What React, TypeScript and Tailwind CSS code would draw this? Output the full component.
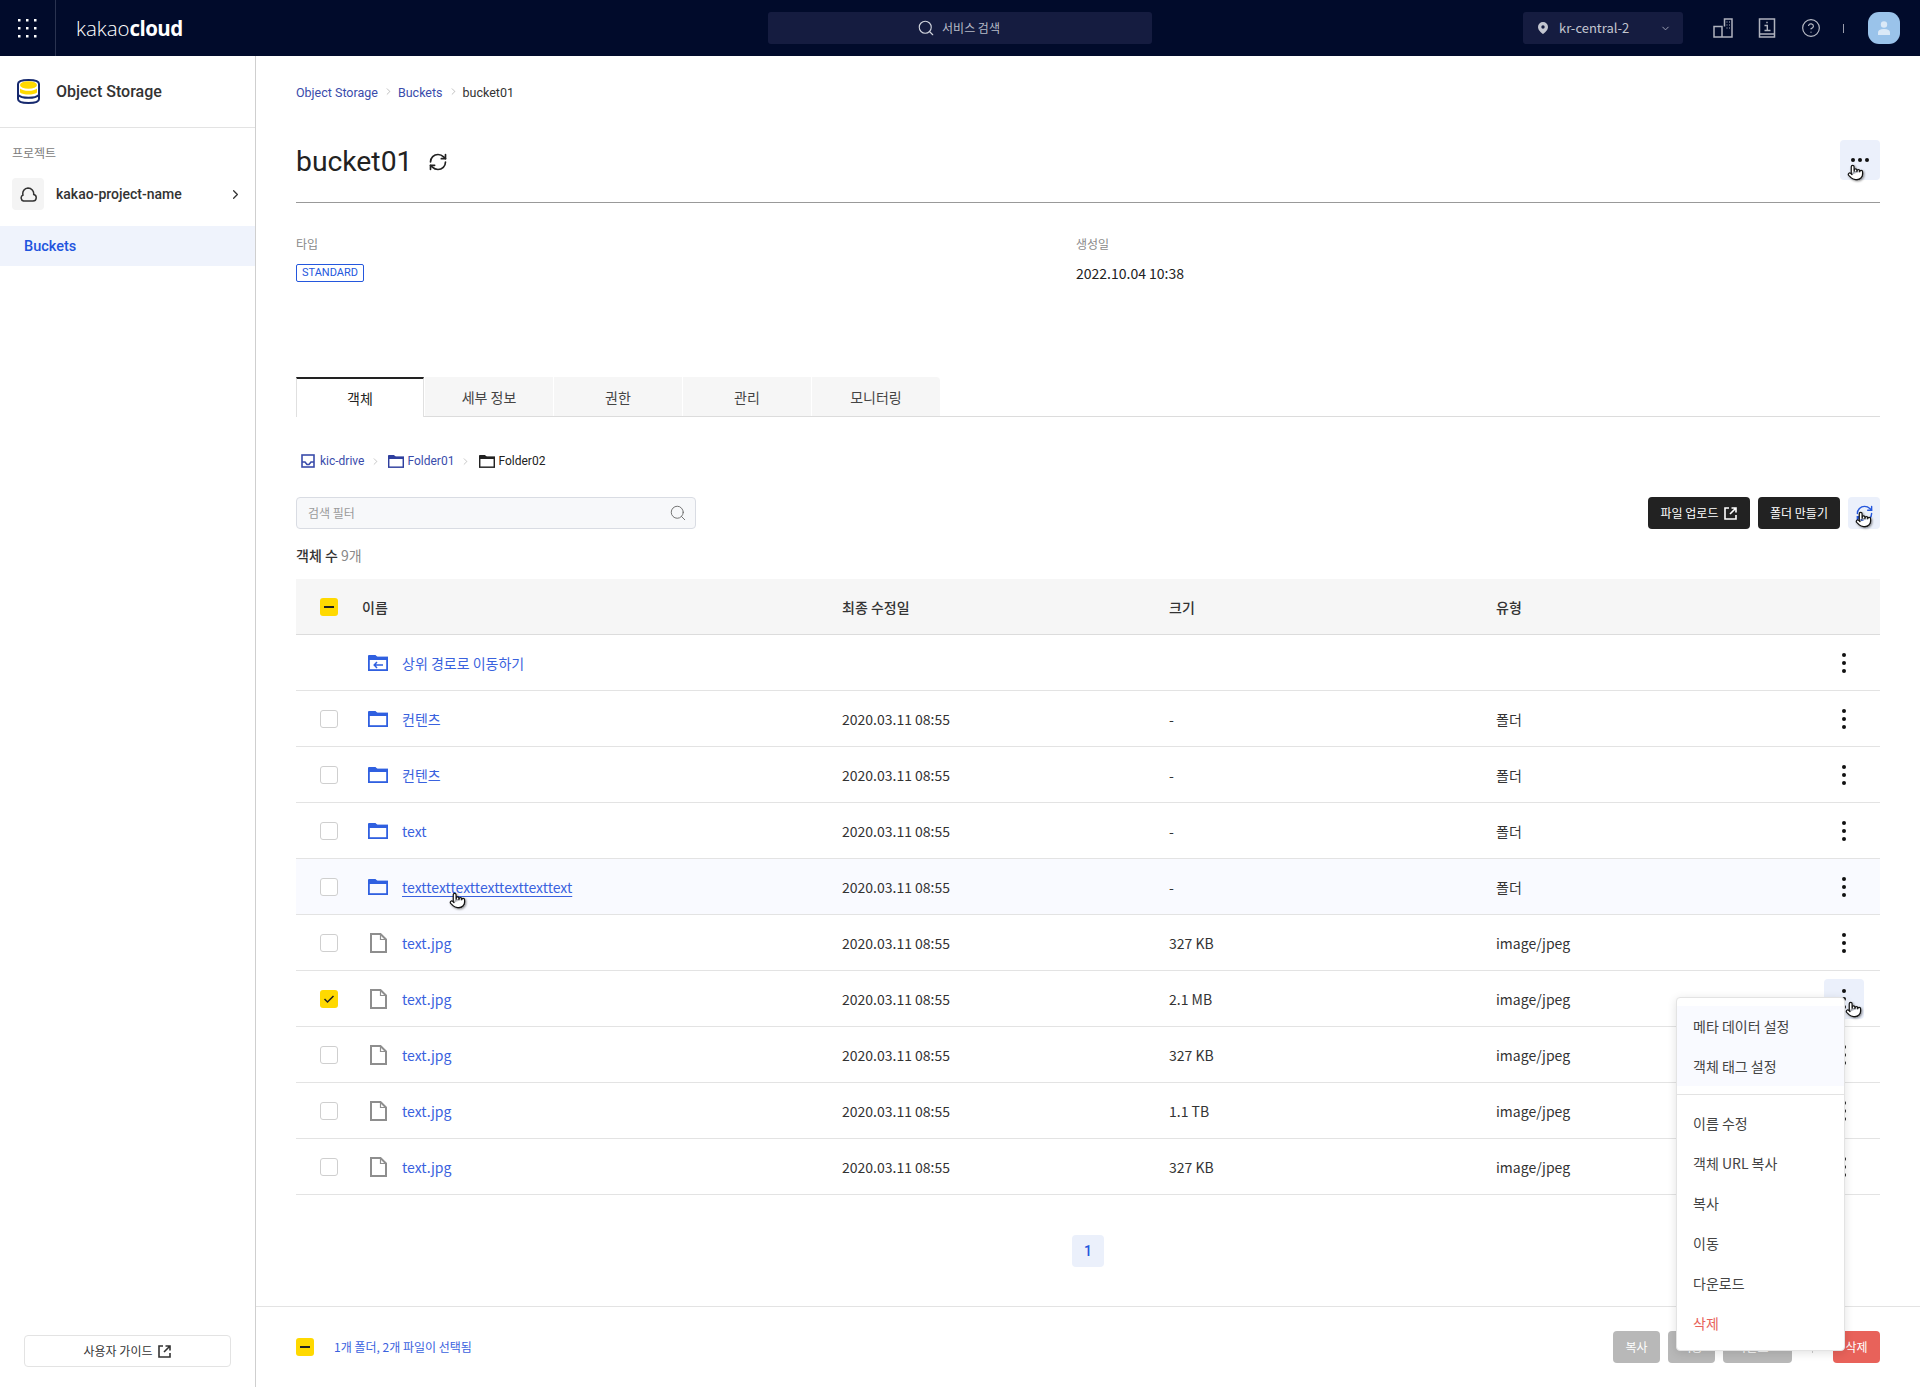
import React from "react";
import { ChevronRight, ChevronDown, CircleHelp, RefreshCw, Search, Pointer } from "lucide-react";

const K = "font-['Noto_Sans_CJK_KR','Noto_Sans',sans-serif]";
const R = "font-['Roboto','Noto_Sans_CJK_KR',sans-serif]";

function Ext({ className = "" }: { className?: string }) {
  return (
    <svg width="13" height="13" viewBox="0 0 13 13" fill="none" stroke="currentColor" strokeWidth="1.6" className={className}>
      <path d="M5 1H1v11h11V8" />
      <path d="M7.500 1H12v4.500M12 1 6 7" />
    </svg>
  );
}

function Folder({ color = "#3060e0", sw = 1.8, small = false }: { color?: string; sw?: number; small?: boolean }) {
  return (
    <svg width={small ? 16 : 20} height={small ? 13 : 16} viewBox="0 0 20 16" fill="none" className="shrink-0">
      <path d="M0 1A1 1 0 0 1 1 0h6.500L10 2.500h10v2.500H0z" fill={color} />
      <rect x={sw / 2} y="2.500" width={20 - sw} height={12.600} stroke={color} strokeWidth={sw} />
    </svg>
  );
}

function FileIcon() {
  return (
    <svg width="17" height="20" viewBox="0 0 17 20" fill="none" className="shrink-0">
      <path d="M1 1h9.500L16 6.500V19H1z" fill="#fff" stroke="#8e8e8e" strokeWidth="2" />
      <path d="M10.500 1v5.500H16" stroke="#8e8e8e" strokeWidth="1.200" />
    </svg>
  );
}

function Cb({ state }: { state: "none" | "mixed" | "checked" }) {
  if (state === "none") return <div className="w-[18px] h-[18px] rounded-[3px] border border-[#cfcfcf] bg-white" />;
  return (
    <div className="w-[18px] h-[18px] rounded-[3px] bg-[#ffd900] flex items-center justify-center">
      {state === "mixed" ? (
        <div className="w-[10px] h-[2px] bg-[#222]" />
      ) : (
        <svg width="12" height="10" viewBox="0 0 12 10" fill="none" stroke="#222" strokeWidth="1.500">
          <path d="M1.500 5 4.500 8l6-6" />
        </svg>
      )}
    </div>
  );
}

function Kebab({ active = false }: { active?: boolean }) {
  return (
    <div className={`w-10 h-10 rounded-[4px] flex flex-col items-center justify-center gap-[4px] ${active ? "bg-[#ebf0fb]" : ""}`}>
      <span className="w-1 h-1 rounded-full bg-[#111]" />
      <span className="w-1 h-1 rounded-full bg-[#111]" />
      <span className="w-1 h-1 rounded-full bg-[#111]" />
    </div>
  );
}

function Hand({ className }: { className: string }) {
  return <Pointer size={17} strokeWidth={1.700} fill="#fff" stroke="#111" className={`absolute drop-shadow-[1px_1px_1px_rgba(0,0,0,0.45)] ${className}`} />;
}

type Row = { name: string; kind: "up" | "folder" | "file"; date?: string; size?: string; type?: string; check?: boolean; hover?: boolean; active?: boolean };
const d = "2020.03.11 08:55";
const rows: Row[] = [
  { name: "상위 경로로 이동하기", kind: "up" },
  { name: "컨텐츠", kind: "folder", date: d, size: "-", type: "폴더" },
  { name: "컨텐츠", kind: "folder", date: d, size: "-", type: "폴더" },
  { name: "text", kind: "folder", date: d, size: "-", type: "폴더" },
  { name: "texttexttexttexttexttexttext", kind: "folder", date: d, size: "-", type: "폴더", hover: true },
  { name: "text.jpg", kind: "file", date: d, size: "327 KB", type: "image/jpeg" },
  { name: "text.jpg", kind: "file", date: d, size: "2.1 MB", type: "image/jpeg", check: true, active: true },
  { name: "text.jpg", kind: "file", date: d, size: "327 KB", type: "image/jpeg" },
  { name: "text.jpg", kind: "file", date: d, size: "1.1 TB", type: "image/jpeg" },
  { name: "text.jpg", kind: "file", date: d, size: "327 KB", type: "image/jpeg" },
];
const cols = "grid grid-cols-[66px_480px_327px_327px_1fr] items-center";

export default function App() {
  return (
    <div className={`relative w-[1920px] h-[1387px] overflow-hidden bg-white text-[#222] flex flex-col ${K}`}>
      {/* top bar */}
      <header className="h-14 bg-[#010b2b] flex items-center shrink-0">
        <div className="w-14 h-14 border-r border-[#2a3350] flex items-center justify-center">
          <svg width="19" height="19" viewBox="0 0 19 19" fill="#fff">
            {[0, 8, 16].flatMap((y) => [0, 8, 16].map((x) => <rect key={`${x}-${y}`} x={x} y={y} width="2.500" height="2.500" />))}
          </svg>
        </div>
        <div className="ml-5 w-[300px] text-[20.500px] leading-none text-white font-['Open_Sans',sans-serif]">
          <span className="font-light">kakao</span>
          <span className="font-bold tracking-[-0.6px]">cloud</span>
        </div>
        <div className="ml-[392px] w-[384px] h-8 rounded-[3px] bg-[#151c40] flex items-center justify-center gap-[7px] pr-[3px] text-[12px] text-[#b6bac6]">
          <Search size={18} strokeWidth={1.500} className="text-[#d0d3dc]" />
          <span>서비스 검색</span>
        </div>
        <div className="ml-[371px] w-[160px] h-8 rounded-[3px] bg-[#151c40] flex items-center pl-[15px] pr-[12px] text-[13px] text-[#c3c6d0]">
          <svg width="10" height="12" viewBox="0 0 10 12" className="shrink-0">
            <path fillRule="evenodd" d="M5 0a5 5 0 0 1 5 5c0 3-3 5.500-5 7C3 10.500 0 8 0 5a5 5 0 0 1 5-5zm0 3.300a1.700 1.700 0 1 0 0 3.400 1.700 1.700 0 0 0 0-3.400z" fill="#c3c6d0" />
          </svg>
          <span className="ml-[11px] flex-1">kr-central-2</span>
          <ChevronDown size={11} className="text-[#a6aabb]" />
        </div>
        <svg width="20" height="20" viewBox="0 0 20 20" fill="none" stroke="#b0b3be" strokeWidth="1.500" className="ml-[30px]">
          <path d="M1 8.500h8V19H1zM9 19h10V1H11.500v7.500" />
          <path d="M13.500 4h1M16 4h1M13.500 7h1M16 7h1M13.500 10h1M16 10h1" strokeWidth="1.200" />
        </svg>
        <svg width="18" height="20" viewBox="0 0 18 20" fill="none" stroke="#b0b3be" strokeWidth="1.500" className="ml-[25px]">
          <path d="M1.500 16V1h15v18h-15zM1.500 16h15" />
          <path d="M9 3.800v1.400M6.500 7.500H9.300V12M6.500 12.500h6" strokeWidth="1.400" />
        </svg>
        <CircleHelp size={20} strokeWidth={1.400} className="ml-[25px] text-[#b9bcc6]" />
        <div className="ml-[22px] w-px h-[9px] bg-[#9a9dac]" />
        <div className="ml-[24px] w-8 h-8 rounded-[11px] bg-[#9ac3ea] flex items-center justify-center">
          <svg width="12" height="14" viewBox="0 0 12 14" fill="#dbe9f7">
            <circle cx="6" cy="3.500" r="3.200" />
            <path d="M0 14v-2.500C0 9.500 2 8 6 8s6 1.500 6 3.500V14z" />
          </svg>
        </div>
      </header>

      <div className="flex-1 flex min-h-0">
        {/* sidebar */}
        <aside className="w-[256px] shrink-0 border-r border-[#cfcfcf] flex flex-col">
          <div className="h-[72px] border-b border-[#e3e3e3] flex items-center pl-[17px] gap-[16px]">
            <svg width="23" height="25" viewBox="0 0 23 25" className="shrink-0">
              <path d="M1 5c0-2.500 4.500-4 10.500-4S22 2.500 22 5v15c0 2.500-4.500 4-10.500 4S1 22.500 1 20z" fill="#fff" stroke="#16296e" strokeWidth="2" />
              <ellipse cx="11.500" cy="6" rx="8.500" ry="3.800" fill="#ffd900" />
              <path d="M3 9.500c2 1.700 5 2.300 8.500 2.300S18 11 20 9.500v4c-2 1.500-5 2-8.500 2S5 15 3 13.500z" fill="#ffd900" />
              <path d="M1 16c2 2 6 2.800 10.500 2.800S20 18 22 16" fill="none" stroke="#16296e" strokeWidth="2" />
            </svg>
            <span className={`text-[16px] font-medium text-[#333] ${R}`}>Object Storage</span>
          </div>
          <div className="pl-3 pt-[16px] text-[12px] leading-[18px] text-[#7b7b7b]">프로젝트</div>
          <div className="mt-[16px] h-8 pl-3 pr-[12px] flex items-center">
            <div className="w-8 h-8 rounded-[4px] bg-[#f4f4f4] flex items-center justify-center">
              <svg width="18" height="15" viewBox="0 0 18 15" fill="none" stroke="#333" strokeWidth="1.500">
                <path d="M4.500 14H14a3.300 3.300 0 0 0 .7-6.500A5.800 5.800 0 0 0 9 1a5.500 5.500 0 0 0-5 7A3.200 3.200 0 0 0 4.500 14z" />
              </svg>
            </div>
            <span className={`ml-3 flex-1 text-[14px] font-medium text-[#333] ${R}`}>kakao-project-name</span>
            <ChevronRight size={15} strokeWidth={2} className="text-[#333]" />
          </div>
          <div className={`mt-4 h-10 bg-[#eff3fc] flex items-center pl-6 pt-[2px] text-[14.500px] font-medium text-[#1f55de] ${R}`}>Buckets</div>
          <div className="mt-auto mx-6 mb-5 h-8 w-[207px] rounded-[4px] border border-[#e3e3e3] flex items-center justify-center gap-[6px] text-[12px] text-[#333]">
            <span>사용자 가이드</span>
            <Ext />
          </div>
        </aside>

        {/* main */}
        <main className="flex-1 min-w-0 flex flex-col">
          <div className="flex-1 px-10 pt-[28px]">
            <div className={`flex items-center h-[18px] text-[12.500px] ${R}`}>
              <span className="text-[#3a4cab]">Object Storage</span>
              <ChevronRight size={11} strokeWidth={1} className="ml-[5px] mr-[4px] -mt-1 text-[#777]" />
              <span className="text-[#3a4cab]">Buckets</span>
              <ChevronRight size={11} strokeWidth={1} className="ml-[5px] mr-[4px] -mt-1 text-[#777]" />
              <span className="text-[#333]">bucket01</span>
            </div>
            <div className="mt-[38px] h-[63px] border-b border-[#999] flex items-start justify-between">
              <div className="flex items-center gap-4 pt-[2px]">
                <h1 className={`text-[28.300px] leading-[40px] font-normal text-[#222] ${R}`}>bucket01</h1>
                <RefreshCw size={20} strokeWidth={2} className="text-[#222]" />
              </div>
              <div className="w-10 h-10 rounded-[4px] bg-[#ebf0fb] flex items-center justify-center gap-[3px]">
                <span className="w-1 h-1 rounded-full bg-[#111]" />
                <span className="w-1 h-1 rounded-full bg-[#111]" />
                <span className="w-1 h-1 rounded-full bg-[#111]" />
              </div>
            </div>
            <div className="mt-[32px] grid grid-cols-[780px_1fr] h-[142px]">
              <div>
                <div className="text-[12px] leading-[18px] text-[#8a8a8a]">타입</div>
                <div className={`mt-[11px] w-[68px] h-[18px] rounded-[2px] border border-[#2457dd] flex items-center justify-center text-[11px] text-[#2457dd] ${R}`}>STANDARD</div>
              </div>
              <div>
                <div className="text-[12px] leading-[18px] text-[#8a8a8a]">생성일</div>
                <div className="mt-[10px] text-[14px] leading-[20px] text-[#222]">2022.10.04 10:38</div>
              </div>
            </div>

            {/* tabs */}
            <div className="flex h-10 gap-px border-b border-[#dcdcdc] text-[14px]">
              <div className="w-[128px] h-10 bg-white border-t-2 border-x border-[#222] border-x-[#e0e0e0] flex items-center justify-center">객체</div>
              {["세부 정보", "권한", "관리", "모니터링"].map((t, i) => (
                <div key={t} className={`w-[128px] h-10 pt-[1px] border-b border-[#dcdcdc] bg-[#f6f6f6] flex items-center justify-center text-[#444] ${i === 3 ? "rounded-tr-[4px]" : ""}`}>
                  {t}
                </div>
              ))}
            </div>

            {/* path */}
            <div className={`mt-[35px] h-[18px] pl-[5px] flex items-center text-[12px] ${R}`}>
              <svg width="14" height="14" viewBox="0 0 14 14" fill="none" stroke="#3a4cab" strokeWidth="1.600" className="mr-[5px]">
                <rect x="1" y="1" width="12" height="12" />
                <path d="M1 8h3l2 2.500h2L10 8h3" />
              </svg>
              <span className="text-[#3a4cab]">kic-drive</span>
              <ChevronRight size={11} strokeWidth={1} className="ml-[6px] mr-[5px] text-[#888]" />
              <span className="mr-[3px] ml-[2px] flex"><Folder small color="#2f3f9e" /></span>
              <span className="text-[#3a4cab]">Folder01</span>
              <ChevronRight size={11} strokeWidth={1} className="ml-[6px] mr-[5px] text-[#888]" />
              <span className="mr-[3px] ml-[3px] flex"><Folder small color="#222" /></span>
              <span className="text-[#222]">Folder02</span>
            </div>

            {/* filters */}
            <div className="mt-[27px] flex items-center justify-between">
              <div className="w-[400px] h-8 rounded-[4px] border border-[#d9dce3] bg-[#f7f8fa] flex items-center justify-between pl-[11px] pr-[8px] text-[12px] text-[#9a9a9a]">
                <span>검색 필터</span>
                <Search size={18} strokeWidth={1.200} className="text-[#666]" />
              </div>
              <div className="flex items-center gap-2">
                <div className="w-[102px] h-8 rounded-[4px] bg-[#222] text-white text-[12px] flex items-center justify-center gap-[6px]">
                  <span>파일 업로드</span>
                  <Ext />
                </div>
                <div className="w-[82px] h-8 rounded-[4px] bg-[#222] text-white text-[12px] flex items-center justify-center">폴더 만들기</div>
                <div className="w-8 h-8 rounded-[4px] bg-[#ebf0fb] flex items-center justify-center">
                  <RefreshCw size={19} strokeWidth={1.800} className="text-[#2457dd]" />
                </div>
              </div>
            </div>

            <div className="mt-[16px] h-[20px] text-[14px] leading-[20px] font-medium text-[#333]">
              객체 수 <span className="font-normal text-[#888]">9개</span>
            </div>

            {/* table */}
            <div className={`mt-[14px] h-[56px] bg-[#f6f6f6] border-b border-[#dcdcdc] text-[14px] leading-[22px] font-medium text-[#333] ${cols}`}>
              <div className="pl-6"><Cb state="mixed" /></div>
              <div className="pt-[1px]">이름</div>
              <div className="pt-[1px]">최종 수정일</div>
              <div className="pt-[1px]">크기</div>
              <div className="pt-[1px]">유형</div>
            </div>
            {rows.map((r, i) => (
              <div key={i} className={`h-[56px] border-b border-[#e3e3e3] text-[14px] leading-[22px] text-[#333] ${cols} ${r.hover ? "bg-[#f9faff]" : ""}`}>
                <div className="pl-6">{r.kind !== "up" && <Cb state={r.check ? "checked" : "none"} />}</div>
                <div className="flex items-center -ml-[1px] pl-[7px]">
                  <span className="w-[34px] flex">
                    {r.kind === "file" ? (
                      <span className="ml-[2px] flex"><FileIcon /></span>
                    ) : r.kind === "folder" ? (
                      <Folder />
                    ) : (
                      <span className="relative flex">
                        <Folder />
                        <svg width="10" height="8" viewBox="0 0 10 8" fill="none" stroke="#3060e0" strokeWidth="1.500" className="absolute left-[5px] top-[6px]">
                          <path d="M4 1 1.200 4 4 7M1.200 4H10" />
                        </svg>
                      </span>
                    )}
                  </span>
                  <span className={`pt-[1px] text-[#3a62de] ${r.hover ? "underline underline-offset-[3px]" : ""}`}>{r.name}</span>
                </div>
                <div className="pt-[1px]">{r.date}</div>
                <div className="pt-[1px]">{r.size}</div>
                <div className="flex items-center justify-between pr-[16px]">
                  <span className="pt-[1px]">{r.type}</span>
                  <Kebab active={r.active} />
                </div>
              </div>
            ))}

            {/* pagination */}
            <div className="mt-10 flex justify-center">
              <div className={`w-8 h-8 rounded-[4px] bg-[#ebf0fb] flex items-center justify-center text-[14px] font-medium text-[#2457dd] ${R}`}>1</div>
            </div>
          </div>

          {/* footer */}
          <div className="h-[81px] shrink-0 border-t border-[#e3e3e3] pl-10 pr-10 flex items-center text-[12px]">
            <Cb state="mixed" />
            <span className="ml-5 text-[#3a62de]">1개 폴더, 2개 파일이 선택됨</span>
            <div className="ml-auto flex items-center text-white">
              <div className="w-[47px] h-8 rounded-[4px] bg-[#b8b8b8] flex items-center justify-center">복사</div>
              <div className="ml-2 w-[47px] h-8 rounded-[4px] bg-[#b8b8b8] flex items-center justify-center">이동</div>
              <div className="ml-2 w-[69px] h-8 rounded-[4px] bg-[#b8b8b8] flex items-center justify-center">다운로드</div>
              <div className="ml-5 w-px h-3 bg-[#ccc]" />
              <div className="ml-5 w-[47px] h-8 rounded-[4px] bg-[#e8625a] flex items-center justify-center">삭제</div>
            </div>
          </div>
        </main>
      </div>

      {/* context menu */}
      <div className="absolute left-[1676px] top-[997px] w-[169px] h-[354px] rounded-[4px] bg-white border border-[#e3e3e3] shadow-[0_2px_10px_rgba(0,0,0,0.12)] pt-2 text-[14px] text-[#444]">
        <div className="bg-[#f9faff]">
          {["메타 데이터 설정", "객체 태그 설정"].map((t) => (
            <div key={t} className="h-10 pl-4 flex items-center">{t}</div>
          ))}
        </div>
        <div className="mt-2 border-t border-[#e3e3e3] pt-2">
          {["이름 수정", "객체 URL 복사", "복사", "이동", "다운로드"].map((t) => (
            <div key={t} className="h-10 pl-4 flex items-center">{t}</div>
          ))}
          <div className="h-10 pl-4 flex items-center text-[#e8625a]">삭제</div>
        </div>
      </div>

      {/* cursors */}
      <Hand className="left-[1847px] top-[164px]" />
      <Hand className="left-[1855px] top-[511px]" />
      <Hand className="left-[449px] top-[892px]" />
      <Hand className="left-[1845px] top-[1001px]" />
    </div>
  );
}
